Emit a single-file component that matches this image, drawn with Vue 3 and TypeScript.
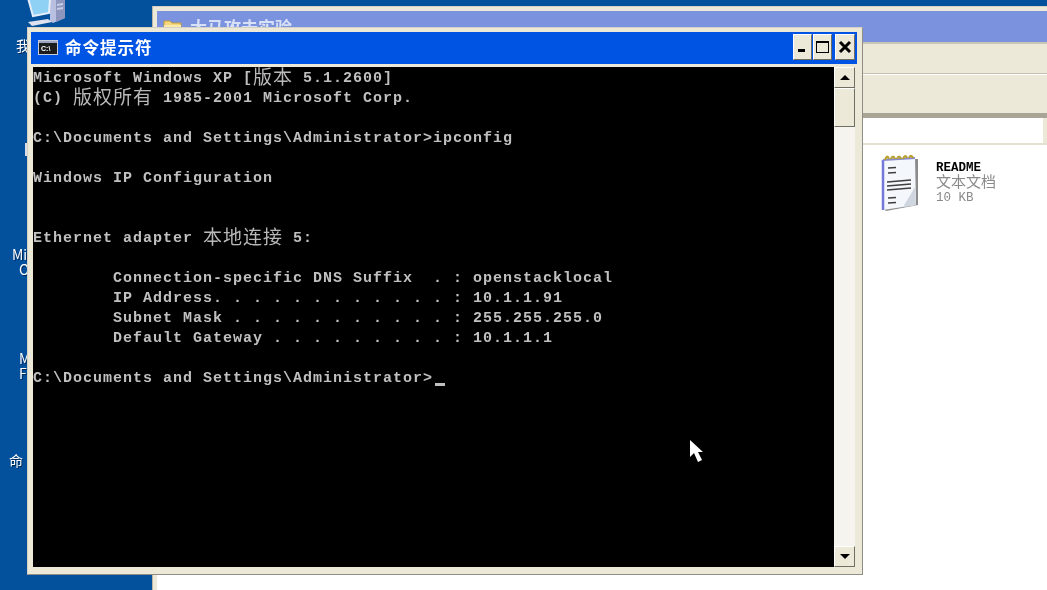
<script setup lang="ts">
type Seg = { t: string; cjk?: boolean }
const lines: Seg[][] = [
  [{ t: 'Microsoft Windows XP [' }, { t: '版本', cjk: true }, { t: ' 5.1.2600]' }],
  [{ t: '(C) ' }, { t: '版权所有', cjk: true }, { t: ' 1985-2001 Microsoft Corp.' }],
  [],
  [{ t: 'C:\\Documents and Settings\\Administrator>ipconfig' }],
  [],
  [{ t: 'Windows IP Configuration' }],
  [],
  [],
  [{ t: 'Ethernet adapter ' }, { t: '本地连接', cjk: true }, { t: ' 5:' }],
  [],
  [{ t: '        Connection-specific DNS Suffix  . : openstacklocal' }],
  [{ t: '        IP Address. . . . . . . . . . . . : 10.1.1.91' }],
  [{ t: '        Subnet Mask . . . . . . . . . . . : 255.255.255.0' }],
  [{ t: '        Default Gateway . . . . . . . . . : 10.1.1.1' }],
  [],
  [{ t: 'C:\\Documents and Settings\\Administrator>' }],
]
const lastIndex = lines.length - 1
const deskLabels = [
  { t: '我', x: 16, y: 37 },
  { t: 'Mi', x: 12, y: 246 },
  { t: 'O', x: 19, y: 261 },
  { t: 'M', x: 19, y: 350 },
  { t: 'F', x: 19, y: 365 },
  { t: '命', x: 9, y: 452 },
]
</script>

<template>
  <div class="desktop">
    <svg class="pc-icon" width="42" height="30" viewBox="0 0 42 30">
      <path d="M24 0h15v20l-12 5-3-2z" fill="#b9bfe0" />
      <path d="M30 0h9v20l-9 4z" fill="#8e96bd" />
      <path d="M31 6l6-1v2l-6 1zM31 10l6-1v2l-6 1z" fill="#c8cde6" />
      <path d="M2 0h22l-1 15-16 3z" fill="#8fd0f5" stroke="#e6eefa" stroke-width="2" />
      <path d="M2 24l20-3 4 3-20 4z" fill="#dfe3ef" />
    </svg>
    <span v-for="l in deskLabels" :key="l.y" class="desk-label" :style="{ left: l.x + 'px', top: l.y + 'px' }">{{ l.t }}</span>
    <i class="desk-mark"></i>

    <section class="explorer">
      <header class="ex-title">
        <svg width="20" height="18" viewBox="0 0 20 18">
          <path d="M1 4h6l2 2h9v11H1z" fill="#f6d77c" stroke="#c09a3a" />
          <path d="M1 8h17v9H1z" fill="#fbe9a9" />
        </svg>
        <span class="ex-name">大马攻击实验</span>
      </header>
      <div class="ex-menu"></div>
      <div class="ex-tools"></div>
      <div class="ex-address"><i class="ex-addr-end"></i></div>
      <div class="ex-content">
        <svg class="note-icon" width="38" height="57" viewBox="0 0 38 57">
          <path d="M34 4l3 0 0 46-32 6-2-2z" fill="#8c8c8c" />
          <path d="M2 5l32-2 1 47-33 5z" fill="#f4f7fc" />
          <path d="M22 52l13-2-1-18z" fill="#d0d6e0" />
          <path d="M2 5v50" stroke="#7478d8" stroke-width="2.5" />
          <path d="M2 5l32-2" stroke="#8488d8" stroke-width="2" />
          <path d="M4 5q2-6 4-1M10 4q2-5 4 0M16 4q2-5 4 0M22 4q2-5 4-1M28 3q2-4 4 0" fill="none" stroke="#b8a030" stroke-width="2.2" />
          <path d="M7 13l8-.5M7 18l8-.5M6 27l24-2M6 31l24-2M6 35l24-2M7 43l8-.5M7 48l8-.5" stroke="#3f3f3f" stroke-width="1.6" />
        </svg>
        <div class="file-meta">
          <div class="file-name">README</div>
          <div class="file-kind">文本文档</div>
          <div class="file-size">10 KB</div>
        </div>
      </div>
    </section>

    <section class="cmd">
      <header class="cmd-title">
        <svg class="cmd-icon" width="20" height="15" viewBox="0 0 20 15">
          <rect x="0.5" y="0.5" width="19" height="14" fill="#1c1c1c" stroke="#c8ccd8" />
          <rect x="1" y="1" width="18" height="2" fill="#9aa4c0" />
          <text x="3" y="11" class="cmd-icon-text">C:\</text>
        </svg>
        <span class="cmd-name">命令提示符</span>
        <div class="win-btns">
          <button class="wbtn"><i class="min-glyph"></i></button>
          <button class="wbtn"><i class="max-glyph"></i></button>
          <button class="wbtn close">
            <svg width="14" height="14" viewBox="0 0 14 14"><path d="M2 2l10 10M12 2L2 12" stroke="#000" stroke-width="3" /></svg>
          </button>
        </div>
      </header>
      <div class="cmd-body">
        <div class="console">
          <div v-for="(line, i) in lines" :key="i" class="line">
            <template v-for="(seg, j) in line" :key="j">
              <span v-if="seg.cjk" class="cjk">{{ seg.t }}</span>
              <template v-else>{{ seg.t }}</template>
            </template>
            <i v-if="i === lastIndex" class="caret"></i>
          </div>
        </div>
        <div class="scrollbar">
          <button class="sb-btn"><i class="tri up"></i></button>
          <div class="sb-thumb"></div>
          <div class="sb-track"></div>
          <button class="sb-btn"><i class="tri down"></i></button>
        </div>
      </div>
    </section>

    <svg class="pointer" width="16" height="26" viewBox="0 0 16 26">
      <path d="M1 1v17l4-4 4 9 4-2-4-8h5z" fill="#fff" />
    </svg>
  </div>
</template>

<style scoped>
.desktop {
  position: relative;
  width: 1047px;
  height: 590px;
  overflow: hidden;
  background: #03509c;
  font-family: "Liberation Mono", monospace;
  filter: blur(0.35px);
}
.pc-icon { position: absolute; left: 26px; top: -2px; }
.desk-label {
  position: absolute;
  color: #fff;
  font: 14px/17px "Noto Sans CJK SC", "Liberation Sans", sans-serif;
  text-shadow: 1px 1px 0 #00275a;
}
.desk-mark { position: absolute; left: 25px; top: 143px; width: 2px; height: 13px; background: #d8dde8; }

.explorer {
  position: absolute;
  left: 152px;
  top: 6px;
  width: 910px;
  height: 600px;
  display: flex;
  flex-direction: column;
  background: #ece9d8;
  padding: 4px 0 0 4px;
  box-sizing: border-box;
  border-top: 1px solid #d5d2c4;
  border-left: 1px solid #b9b6a8;
}
.ex-title {
  height: 33px;
  background: #7b93df;
  display: flex;
  align-items: flex-start;
  gap: 7px;
  padding: 6px 0 0 6px;
  box-sizing: border-box;
  border-bottom: 2px solid #c9c6b8;
  flex: none;
}
.ex-name {
  color: #d8e0f5;
  font: bold 17px/20px "Noto Sans CJK SC", sans-serif;
}
.ex-menu { height: 29px; flex: none; border-bottom: 1px solid #c5c2b4; }
.ex-tools { height: 44px; flex: none; box-sizing: border-box; border-top: 1px solid #fff; border-bottom: 5px solid #a8a596; }
.ex-address {
  height: 27px;
  box-sizing: border-box;
  background: #fff;
  flex: none;
  border-bottom: 2px solid #e4e1d2;
  position: relative;
}
.ex-addr-end { position: absolute; left: 886px; top: 0; width: 6px; height: 25px; background: #ece9d8; }
.ex-content {
  flex: 1;
  background: #fff;
  display: flex;
  align-items: flex-start;
  gap: 17px;
  padding: 10px 0 0 724px;
}
.note-icon { flex: none; }
.file-meta { padding-top: 6px; }
.file-name { font: bold 12.5px/15px "Liberation Mono", monospace; color: #000; }
.file-kind { font: 15px/15px "Noto Sans CJK SC", sans-serif; color: #8a8a8a; margin: -3px 0 3px; }
.file-size { font: 12.5px/15px "Liberation Mono", monospace; color: #8a8a8a; }

.cmd {
  position: absolute;
  left: 27px;
  top: 27px;
  width: 836px;
  height: 548px;
  box-sizing: border-box;
  background: #ece9d8;
  border: 1px solid;
  border-color: #d5d2c4 #908e84 #908e84 #d5d2c4;
  padding: 4px 5px 7px 3px;
  display: flex;
  flex-direction: column;
}
.cmd-title {
  height: 32px;
  flex: none;
  background: #0054e3;
  display: flex;
  align-items: center;
  padding: 0 2px 2px 7px;
  box-sizing: border-box;
}
.cmd-icon-text { font: bold 7px "Liberation Sans", sans-serif; fill: #fff; }
.cmd-name {
  margin-left: 7px;
  color: #fff;
  font: bold 16.5px/20px "Noto Sans CJK SC", sans-serif;
  letter-spacing: 1px;
}
.win-btns { margin-left: auto; display: flex; gap: 1px; }
.wbtn {
  width: 19px;
  height: 26px;
  padding: 0;
  background: #ece9d8;
  border: 1px solid;
  border-color: #fff #716f64 #716f64 #fff;
  position: relative;
  display: flex;
  align-items: center;
  justify-content: center;
}
.wbtn.close { margin-left: 2px; width: 20px; }
.min-glyph { position: absolute; left: 4px; bottom: 7px; width: 7px; height: 3px; background: #000; }
.max-glyph { width: 11px; height: 9px; border: 1px solid #000; border-top-width: 2px; }

.cmd-body { flex: 1; display: flex; margin-top: 3px; min-height: 0; padding-left: 2px; }
.console {
  width: 801px;
  flex: none;
  background: #000;
  color: #c0c0c0;
  font: bold 15px/20px "Liberation Mono", monospace;
  letter-spacing: 1px;
  white-space: pre;
  padding-top: 2px;
  box-sizing: border-box;
  overflow: hidden;
}
.line { height: 20px; }
.cjk {
  font: 19px/1px "Noto Sans CJK SC", sans-serif;
  letter-spacing: 1px;
  color: #b8b8b8;
  vertical-align: -2px;
}
.caret { display: inline-block; width: 10px; height: 3px; margin-left: 2px; background: #c0c0c0; vertical-align: -4px; }

.scrollbar {
  width: 21px;
  flex: none;
  display: flex;
  flex-direction: column;
  background: #f5f4ee;
}
.sb-btn, .sb-thumb {
  background: #ece9d8;
  border: 1px solid;
  border-color: #fff #716f64 #716f64 #fff;
  box-sizing: border-box;
  padding: 0;
  flex: none;
}
.sb-btn { height: 21px; display: flex; align-items: center; justify-content: center; }
.sb-thumb { height: 39px; }
.sb-track { flex: 1; }
.tri { width: 0; height: 0; border-left: 5px solid transparent; border-right: 5px solid transparent; }
.tri.up { border-bottom: 5px solid #000; }
.tri.down { border-top: 5px solid #000; }

.pointer { position: absolute; left: 689px; top: 439px; }
</style>
